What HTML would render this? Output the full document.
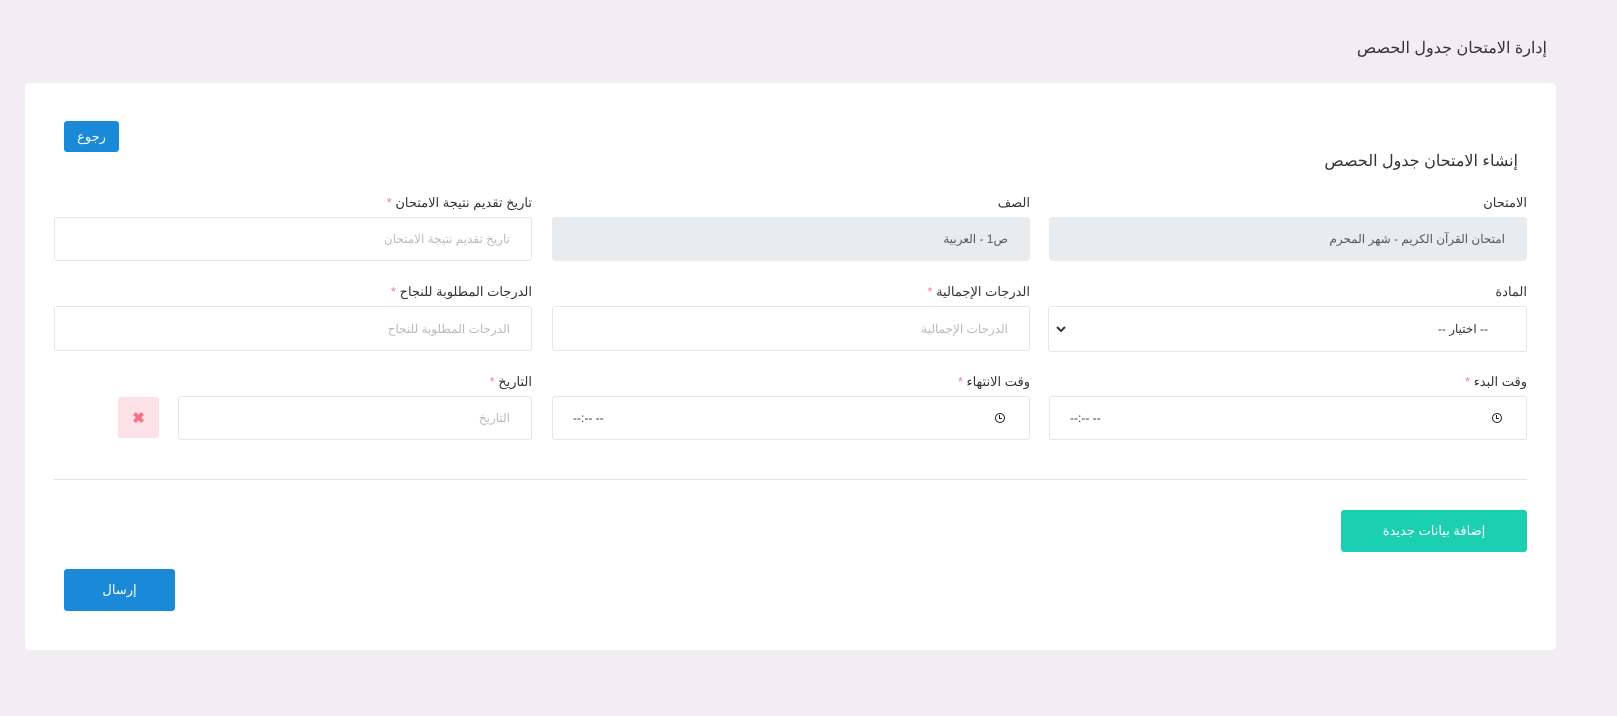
<!DOCTYPE html>
<html dir="rtl"><head><meta charset="utf-8">
<style>
*{box-sizing:border-box;margin:0;padding:0}
body{width:1617px;height:716px;background:#f1edf3;font-family:"Liberation Sans","Noto Sans CJK SC",sans-serif;position:relative;overflow:hidden;color:#333}
.a{position:absolute}
.card{left:25px;top:83px;width:1531px;height:567px;background:#fff;border-radius:4px}
.lbl{font-size:13px;color:#333;text-align:right;white-space:nowrap}
.lbl i{font-style:normal;color:#f0828a}
.inp{border:1px solid #e3e6ea;border-radius:3px;background:#fff;font-size:12px;color:#bbb;text-align:right;padding-right:21px;display:flex;align-items:center}
.ro{background:#e9ecef;border-color:#e9ecef;color:#555}
.btn{border-radius:3px;color:#fff;font-size:13px;display:flex;align-items:center;justify-content:center}
.time{color:#333;justify-content:space-between;padding:0 24px 0 20px}
.clk{width:10px;height:10px;border:1.4px solid #222;border-radius:50%;position:relative}
.clk:after{content:"";position:absolute;left:3px;top:1px;width:2px;height:3px;border-left:1.2px solid #222;border-bottom:1.2px solid #222}
</style></head><body>
<div class="a" style="right:70px;top:38px;font-size:16px;color:#333">إدارة الامتحان جدول الحصص</div>
<div class="a card"></div>
<div class="a btn" style="left:64px;top:121px;width:55px;height:31px;background:#1a8ad8">رجوع</div>
<div class="a" style="right:99px;top:151px;font-size:16px;color:#333">إنشاء الامتحان جدول الحصص</div>

<div class="a lbl" style="right:90px;top:195px">الامتحان</div>
<div class="a inp ro" style="left:1049px;top:217px;width:478px;height:44px">امتحان القرآن الكريم - شهر المحرم</div>
<div class="a lbl" style="right:587px;top:195px">الصف</div>
<div class="a inp ro" style="left:552px;top:217px;width:478px;height:44px">ص1 - العربية</div>
<div class="a lbl" style="right:1085px;top:195px">تاريخ تقديم نتيجة الامتحان <i>*</i></div>
<div class="a inp" style="left:54px;top:217px;width:478px;height:44px">تاريخ تقديم نتيجة الامتحان</div>

<div class="a lbl" style="right:90px;top:284px">المادة</div>
<div class="a inp" style="left:1048px;top:306px;width:479px;height:46px;color:#333;justify-content:space-between;padding:0 38px 0 6px"><span>-- اختيار --</span><svg width="12" height="8" viewBox="0 0 12 8"><path d="M2 2 L6 6 L10 2" fill="none" stroke="#333" stroke-width="2"/></svg></div>
<div class="a lbl" style="right:587px;top:284px">الدرجات الإجمالية <i>*</i></div>
<div class="a inp" style="left:552px;top:306px;width:478px;height:45px">الدرجات الإجمالية</div>
<div class="a lbl" style="right:1085px;top:284px">الدرجات المطلوبة للنجاح <i>*</i></div>
<div class="a inp" style="left:54px;top:306px;width:478px;height:45px">الدرجات المطلوبة للنجاح</div>

<div class="a lbl" style="right:90px;top:374px">وقت البدء <i>*</i></div>
<div class="a inp time" style="left:1049px;top:396px;width:478px;height:44px"><span class="clk"></span><span style="direction:ltr">--:-- --</span></div>
<div class="a lbl" style="right:587px;top:374px">وقت الانتهاء <i>*</i></div>
<div class="a inp time" style="left:552px;top:396px;width:478px;height:44px"><span class="clk"></span><span style="direction:ltr">--:-- --</span></div>
<div class="a lbl" style="right:1085px;top:374px">التاريخ <i>*</i></div>
<div class="a inp" style="left:178px;top:396px;width:354px;height:44px">التاريخ</div>
<div class="a btn" style="left:118px;top:397px;width:41px;height:41px;background:#fde1e6;color:#f57186;font-size:15px;font-weight:bold">✖</div>

<div class="a" style="left:54px;top:479px;width:1473px;height:1px;background:#e3e3e3"></div>
<div class="a btn" style="left:1341px;top:510px;width:186px;height:42px;background:#1ccfb1">إضافة بيانات جديدة</div>
<div class="a btn" style="left:64px;top:569px;width:111px;height:42px;background:#1a8ad8">إرسال</div>
</body></html>
